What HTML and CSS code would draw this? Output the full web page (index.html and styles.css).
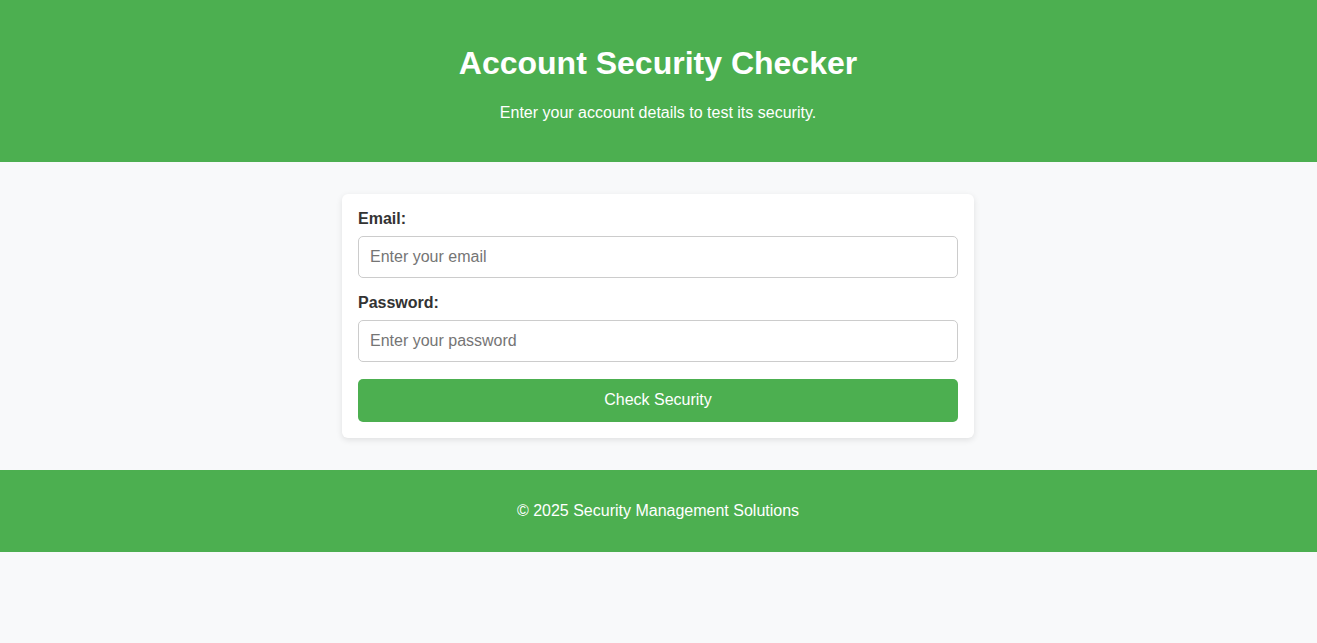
FILE: index.html
```html
<!DOCTYPE html>
<html lang="en">
<head>
<meta charset="utf-8">
<title>Account Security Checker</title>
<link rel="stylesheet" href="styles.css">
</head>
<body>
<header class="site-header">
  <h1 class="title">Account Security Checker</h1>
  <p class="subtitle">Enter your account details to test its security.</p>
</header>
<main class="main">
  <form class="card">
    <label class="label" for="email">Email:</label>
    <input class="input" id="email" type="email" placeholder="Enter your email">
    <label class="label" for="password">Password:</label>
    <input class="input" id="password" type="password" placeholder="Enter your password">
    <button class="button" type="button">Check Security</button>
  </form>
</main>
<footer class="site-footer">
  <p class="footer-text">© 2025 Security Management Solutions</p>
</footer>
</body>
</html>
```
FILE: styles.css
```css
* { box-sizing: border-box; }
body {
  margin: 0;
  font-family: "Liberation Sans", Arial, sans-serif;
  background: #f8f9fa;
  color: #333;
}
.site-header {
  background: #4caf50;
  color: #fff;
  text-align: center;
  padding: 24px 25px 24px 24px;
}
.title {
  font-size: 32px;
  margin: 21.44px 0;
}
.subtitle {
  font-size: 16px;
  margin: 16px 0;
}
.main {
  padding: 32px 1px 32px 0;
  display: flex;
  justify-content: center;
}
.card {
  width: 632px;
  background: #fff;
  border-radius: 6px;
  box-shadow: 0 2px 6px rgba(0,0,0,0.1);
  padding: 16px;
  display: flex;
  flex-direction: column;
}
.label {
  font-weight: bold;
  font-size: 16px;
  color: #333;
  margin-bottom: 8px;
}
.input {
  height: 42px;
  padding: 0 11px;
  border: 1px solid #ccc;
  border-radius: 5px;
  font-family: inherit;
  font-size: 16px;
  margin-bottom: 16px;
  color: #333;
}
.input::placeholder { color: #757575; }
.button {
  height: 43px;
  margin-top: 1px;
  border: none;
  border-radius: 5px;
  background: #4caf50;
  color: #fff;
  font-family: inherit;
  font-size: 16px;
  cursor: pointer;
}
.site-footer {
  background: #4caf50;
  color: #fff;
  text-align: center;
  padding: 16px 17px 16px 16px;
}
.footer-text {
  margin: 16px 0;
  font-size: 16px;
}
```
